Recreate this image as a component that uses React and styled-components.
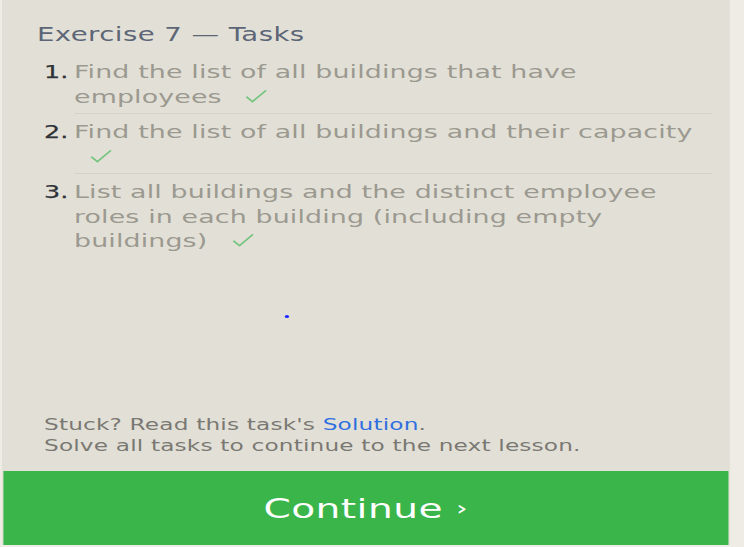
import React from "react";
import styled, { createGlobalStyle } from "styled-components";

/* The reference is rendered with a wide, horizontally stretched face:
   the panel is laid out at its natural width and stretched once. */
const S = 1.45;
const px = (v) => `${v / S}px`;

const Global = createGlobalStyle`
  html, body { margin: 0; padding: 0; background: #efece5; }
  body { font-family: "DejaVu Sans", "Liberation Sans", sans-serif; }
`;

const Page = styled.div`
  width: 744px;
  height: 547px;
  background: #efece5;
  overflow: hidden;
`;

const Panel = styled.div`
  margin-left: 2px;
  width: ${px(728)};
  height: 545px;
  background: #e2e0d6;
  display: flex;
  flex-direction: column;
  position: relative;
  transform: scaleX(${S});
  transform-origin: 0 0;
`;

const Content = styled.div`
  flex: 1;
  padding: 22px ${px(17)} 0 ${px(35)};
`;

const Title = styled.h2`
  margin: 0 0 8px;
  font-size: 19px;
  font-weight: normal;
  letter-spacing: 0.3px;
  color: #5d6676;
  line-height: 24px;
`;

const List = styled.ol`
  margin: 0;
  padding: 0;
  list-style: none;
`;

const Item = styled.li`
  display: flex;
  padding: 6px 0 4px;
  border-bottom: ${(p) => (p.$last ? "none" : "1px solid #d5d3c9")};
  margin-left: ${px(37)};
  position: relative;
`;

const Num = styled.span`
  position: absolute;
  left: ${px(-30)};
  top: 6px;
  font-size: 17.5px;
  line-height: 24.5px;
  color: #2e3237;
  -webkit-text-stroke: 0.25px #2e3237;
`;

const Text = styled.span`
  font-size: 18.5px;
  line-height: 24.5px;
  letter-spacing: 0.1px;
  color: #9b9990;
`;

const Check = styled.svg`
  display: inline-block;
  width: ${px(24)};
  height: 15px;
  margin-left: ${px(14.5)};
  vertical-align: -1px;
`;

const Dot = styled.span`
  position: absolute;
  left: ${px(283)};
  top: 315px;
  width: ${px(4)};
  height: 3px;
  border-radius: 50%;
  background: #1f2bff;
`;

const Footer = styled.div`
  padding: 0 0 15px ${px(42)};
  font-size: 16px;
  line-height: 21px;
  letter-spacing: 0.12px;
  color: #7a7873;
`;

const Link = styled.a`
  color: #2f6fe0;
  text-decoration: none;
`;

const Button = styled.button`
  margin: 0 0 0 ${px(1)};
  width: ${px(725)};
  height: 74px;
  border: none;
  background: #39b54a;
  color: #fff;
  font-family: "DejaVu Sans", sans-serif;
  font-size: 27px;
  letter-spacing: 0.3px;
  display: flex;
  align-items: center;
  justify-content: center;
  gap: ${px(13)};
  padding: 0;
`;

const Chevron = styled.span`
  font-size: 20px;
  letter-spacing: 0;
`;

const CheckMark = () => (
  <Check viewBox="0 0 16 15" preserveAspectRatio="none">
    <path d="M1.5 7.8 L5.6 12.6 L14.6 1.4" fill="none" stroke="#74c47f" strokeWidth="1.4" />
  </Check>
);

const tasks = [
  "Find the list of all buildings that have employees",
  "Find the list of all buildings and their capacity",
  "List all buildings and the distinct employee roles in each building (including empty buildings)",
];

export default function App() {
  return (
    <Page>
      <Global />
      <Panel>
        <Content>
          <Title>Exercise 7 — Tasks</Title>
          <List>
            {tasks.map((t, i) => (
              <Item key={i} $last={i === tasks.length - 1}>
                <Num>{i + 1}.</Num>
                <Text>
                  {t} <CheckMark />
                </Text>
              </Item>
            ))}
          </List>
        </Content>
        <Dot />
        <Footer>
          Stuck? Read this task's <Link href="#">Solution</Link>.
          <br />
          Solve all tasks to continue to the next lesson.
        </Footer>
        <Button>
          Continue<Chevron>›</Chevron>
        </Button>
      </Panel>
    </Page>
  );
}
